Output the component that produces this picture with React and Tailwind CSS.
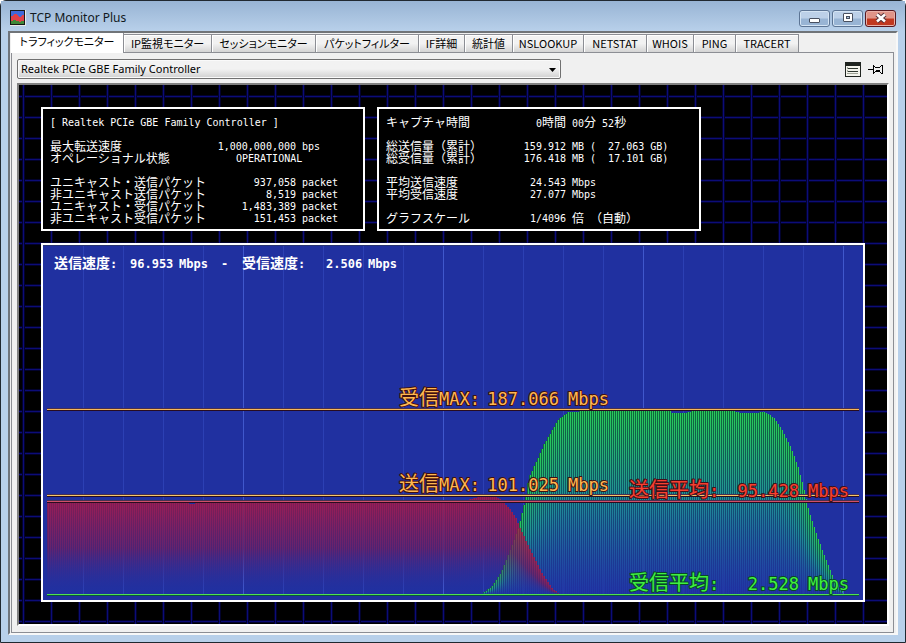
import { useState } from "react";
import clsx from "clsx";

const TABS = [
  { label: "トラフィックモニター", width: "w-[113px]" },
  { label: "IP監視モニター", width: "w-[88px]" },
  { label: "セッションモニター", width: "w-[104px]" },
  { label: "パケットフィルター", width: "w-[103px]" },
  { label: "IF詳細", width: "w-[46px]" },
  { label: "統計値", width: "w-[48px]" },
  { label: "NSLOOKUP", width: "w-[71px]" },
  { label: "NETSTAT", width: "w-[63px]" },
  { label: "WHOIS", width: "w-[47px]" },
  { label: "PING", width: "w-[42px]" },
  { label: "TRACERT", width: "w-[63px]" },
];

const INTERFACE_ROWS = [
  ["最大転送速度", "1,000,000,000", "bps"],
  ["オペレーショナル状態", "OPERATIONAL"],
  null,
  ["ユニキャスト・送信パケット", "937,058", "packet"],
  ["非ユニキャスト送信パケット", "8,519", "packet"],
  ["ユニキャスト・受信パケット", "1,483,389", "packet"],
  ["非ユニキャスト受信パケット", "151,453", "packet"],
];

const CAPTURE_ROWS = [
  ["キャプチャ時間", "0時間", "00分 52秒"],
  null,
  ["総送信量（累計）", "159.912", "MB (  27.063 GB)"],
  ["総受信量（累計）", "176.418", "MB (  17.101 GB)"],
  null,
  ["平均送信速度", "24.543", "Mbps"],
  ["平均受信速度", "27.077", "Mbps"],
  null,
  ["グラフスケール", "1/4096", "倍 （自動）"],
];

// [x, y] of the top of the traffic curves, in chart units
const BASE = 349;
const SENT = [
  [4, 256], [33, 256], [34, 257], [145, 257], [146, 259], [150, 259], [151, 257],
  [414, 257], [424, 255], [434, 252], [450, 251], [457, 255], [465, 263], [471, 271],
  [477, 285], [487, 306], [497, 326], [507, 342], [515, 349],
];
const RECEIVED = [
  [438, 349], [447, 342], [457, 327], [467, 303], [474, 284], [480, 260], [485, 232],
  [494, 213], [500, 199], [507, 187], [514, 175], [524, 167], [547, 166], [626, 166],
  [627, 168], [640, 168], [650, 166], [690, 166], [697, 168], [710, 168], [720, 167],
  [724, 169], [730, 173], [739, 187], [747, 203], [754, 222], [760, 245], [765, 267],
  [772, 288], [779, 308], [789, 332], [799, 348],
];

function sample(points) {
  const bars = [];
  let i = 0;
  for (let x = points[0][0]; x < points[points.length - 1][0]; x += 2) {
    while (points[i + 1][0] < x) i++;
    const [x0, y0] = points[i];
    const [x1, y1] = points[i + 1];
    const y = Math.round(y0 + ((y1 - y0) * (x - x0)) / (x1 - x0));
    if (y < BASE) bars.push({ x, y });
  }
  return bars;
}

// Japanese glyphs are two cells wide, latin ones a single cell
function Cells({ text }) {
  return (
    <div className="h-3">
      {text.split(/([^\x00-\x7f]+)/).map((part, i) =>
        i % 2 ? (
          <span key={i} className="text-[12px] leading-3">{part}</span>
        ) : (
          <span key={i}>{part}</span>
        )
      )}
    </div>
  );
}

function InfoTable({ rows, valueWidth, unitWidth }) {
  return (
    <table className="w-full table-fixed border-collapse">
      <colgroup>
        <col />
        <col className={valueWidth} />
        <col className={unitWidth} />
      </colgroup>
      <tbody>
        {rows.map((row, i) =>
          row ? (
            <tr key={i} className="h-3">
              <th scope="row" className="h-3 p-0 text-left align-top font-normal">
                <Cells text={row[0]} />
              </th>
              {row.length === 2 ? (
                <td colSpan={2} className="h-3 p-0 pl-9 align-top">
                  <Cells text={row[1]} />
                </td>
              ) : (
                <>
                  <td className="h-3 p-0 text-right align-top"><Cells text={row[1]} /></td>
                  <td className="h-3 p-0 pl-[6px] align-top"><Cells text={row[2]} /></td>
                </>
              )}
            </tr>
          ) : (
            <tr key={i} className="h-3" />
          )
        )}
      </tbody>
    </table>
  );
}

function InfoPanel({ children }) {
  return (
    <section className="w-[324px] h-[124px] shrink-0 border-2 border-white bg-black px-[7px] pt-2 pb-1 font-['DejaVu_Sans_Mono','Noto_Sans_CJK_JP',monospace] text-[10px] leading-3 whitespace-pre text-white">
      {children}
    </section>
  );
}

function Bars({ points, fill, shade }) {
  return sample(points).map(({ x, y }) => (
    <g key={x}>
      <rect x={x} y={y} width="1" height={BASE - y} fill={shade} />
      <rect x={x + 1} y={y} width="1" height={BASE - y} fill={fill} />
    </g>
  ));
}

function Gradient({ id, from, mid, to, opacity, end }) {
  return (
    <linearGradient id={id} x1="0" y1="0" x2="0" y2="1">
      <stop offset="0" stopColor={from} stopOpacity={opacity} />
      <stop offset="0.5" stopColor={mid} stopOpacity={opacity} />
      <stop offset="1" stopColor={to} stopOpacity={end} />
    </linearGradient>
  );
}

function Level({ y, color }) {
  return (
    <g shapeRendering="crispEdges">
      <rect x="4" y={y - 1} width="812" height="1" fill="#483050" />
      <rect x="4" y={y} width="812" height="1" fill={color} />
      <rect x="4" y={y + 1} width="812" height="1" fill="#280c20" />
    </g>
  );
}

function Caption({ x, y, name, latin = "", value, fill, stroke, unitX }) {
  return (
    <g
      className="font-['DejaVu_Sans_Mono','Noto_Sans_CJK_JP',monospace] text-[17px]"
      fill={fill}
      stroke={stroke}
      strokeWidth="2"
      strokeLinejoin="round"
      paintOrder="stroke"
    >
      <text x={x} y={y}>
        <tspan className="text-[20px]">{name}</tspan>{latin}:
      </text>
      <text x={unitX - 9} y={y} textAnchor="end">{value}</text>
      <text x={unitX} y={y}>Mbps</text>
    </g>
  );
}

function TrafficChart() {
  return (
    <svg
      viewBox="0 0 820 355"
      className="block h-auto w-full bg-[#2030a0]"
      role="img"
      aria-label="送信速度と受信速度"
    >
      <defs>
        <Gradient id="rx" from="#28cc58" mid="#208c98" to="#2038a8" opacity="1" end="0.7" />
        <Gradient id="rxShade" from="#10683c" mid="#105070" to="#2030a0" opacity="1" end="0.6" />
        <Gradient id="tx" from="#b81844" mid="#782060" to="#2830a0" opacity="0.8" end="0" />
        <Gradient id="txShade" from="#981840" mid="#581f68" to="#2830a0" opacity="0.8" end="0" />
      </defs>

      <rect width="820" height="1" fill="#283470" />
      <g shapeRendering="crispEdges">
        {Array.from({ length: 20 }, (_, i) => (
          <rect
            key={i}
            x={(i + 1) * 40}
            y="1"
            width="1"
            height="348"
            fill={(i + 1) % 5 === 0 ? "#4058cc" : "#2c40b4"}
          />
        ))}
        <Bars points={RECEIVED} fill="url(#rx)" shade="url(#rxShade)" />
        <Bars points={SENT} fill="url(#tx)" shade="url(#txShade)" />
      </g>

      <Level y={164} color="#f8b858" />
      <Level y={250} color="#f8c868" />
      <Level y={256} color="#d05068" />
      <g shapeRendering="crispEdges">
        <rect x="4" y="350" width="812" height="1" fill="#085040" />
        <rect x="4" y="349" width="812" height="1" fill="#50e050" />
      </g>

      <g
        className="font-['DejaVu_Sans_Mono','Noto_Sans_CJK_JP',monospace] text-[12px] font-bold"
        fill="#ffffff"
      >
        <text x="11" y="23"><tspan className="text-[14px]">送信速度</tspan>:</text>
        <text x="87" y="23">96.953</text>
        <text x="136" y="23">Mbps</text>
        <text x="178" y="23">-</text>
        <text x="199" y="23"><tspan className="text-[14px]">受信速度</tspan>:</text>
        <text x="283" y="23">2.506</text>
        <text x="325" y="23">Mbps</text>
      </g>

      <Caption x={356} unitX={525} y={160} name="受信" latin="MAX" value="187.066" fill="#ffb850" stroke="#401010" />
      <Caption x={356} unitX={525} y={246} name="送信" latin="MAX" value="101.025" fill="#ffb850" stroke="#401010" />
      <Caption x={586} unitX={765} y={252} name="送信平均" value="95.428" fill="#f84030" stroke="#401018" />
      <Caption x={586} unitX={765} y={345} name="受信平均" value="2.528" fill="#40f040" stroke="#084828" />
    </svg>
  );
}

function AppIcon() {
  return (
    <svg width="16" height="16" viewBox="0 0 16 16" shapeRendering="crispEdges" aria-hidden="true">
      <rect width="16" height="16" fill="#e8e8e8" />
      <rect width="15" height="15" fill="#181818" />
      <rect x="1" y="1" width="13" height="13" fill="#4068d8" />
      <path d="M1 6h2V5h1V4h3v1h1v1h1v1h2V6h1V5h2v9H1z" fill="#e04048" />
      <path d="M1 11h2v-1h3v1h3v1h2v-1h3v3H1z" fill="#408838" />
    </svg>
  );
}

function CaptionButton({ label, close, children }) {
  return (
    <button
      type="button"
      aria-label={label}
      className={clsx(
        "flex h-[17px] w-[31px] items-center justify-center rounded-[3px] border",
        close
          ? "border-[#581820] bg-linear-to-b from-[#e09488] from-45% to-[#c03820] to-55% shadow-[inset_0_0_0_1px_#e8b0a8]"
          : "border-[#5c7494] bg-linear-to-b from-[#bcd0e8] from-45% to-[#98b4d4] to-55% shadow-[inset_0_0_0_1px_#d4e4f4]"
      )}
    >
      {children}
    </button>
  );
}

function TitleBar() {
  return (
    <header className="flex h-[30px] items-center bg-linear-to-b from-[#98b4d4] to-[#b8d0ea] pt-1 pr-[9px] pl-[9px]">
      <AppIcon />
      <h1 className="ml-1 flex-1 font-['Noto_Sans',sans-serif] text-[12px] leading-4 text-[#101820]">
        TCP Monitor Plus
      </h1>
      <div className="flex gap-[2px]">
        <CaptionButton label="最小化">
          <svg width="12" height="12" viewBox="0 0 12 12" aria-hidden="true">
            <rect x="0.5" y="6.5" width="10" height="4" rx="0.5" fill="#fff" stroke="#485060" />
          </svg>
        </CaptionButton>
        <CaptionButton label="最大化">
          <svg width="12" height="12" viewBox="0 0 12 12" aria-hidden="true">
            <rect x="1.5" y="1.5" width="9" height="8" rx="0.5" fill="#fff" stroke="#485060" />
            <rect x="4.5" y="4.5" width="3" height="2" fill="#a8c0dc" stroke="#485060" />
          </svg>
        </CaptionButton>
        <CaptionButton label="閉じる" close>
          <svg width="12" height="12" viewBox="0 0 12 12" aria-hidden="true">
            <path d="M2 2.5l8 7m0-7l-8 7" stroke="#503038" strokeWidth="4.4" />
            <path d="M2 2.5l8 7m0-7l-8 7" stroke="#fff" strokeWidth="2.6" />
          </svg>
        </CaptionButton>
      </div>
    </header>
  );
}

function TabBar({ current, onSelect }) {
  return (
    <div role="tablist" className="flex h-[19px] items-end">
      {TABS.map(({ label, width }, i) => (
        <button
          key={label}
          type="button"
          role="tab"
          aria-selected={i === current}
          onClick={() => onSelect(i)}
          className={clsx(
            "flex shrink-0 items-center justify-center whitespace-nowrap border-[#8c8e94] text-[11px] leading-4 [font-feature-settings:'palt']",
            width,
            i === current
              ? "relative -mb-px h-5 border-r bg-white pb-1"
              : "h-[18px] border-t border-r bg-linear-to-b from-[#f2f2f2] from-50% to-[#d4d4d4] pb-px shadow-[inset_1px_1px_0_#fff]"
          )}
        >
          {label}
        </button>
      ))}
    </div>
  );
}

function Toolbar() {
  return (
    <div className="flex items-center pt-[6px] pr-[9px] pb-1 pl-[5px]">
      <div className="relative w-[544px]">
        <select
          aria-label="ネットワークインターフェース"
          className="block h-5 w-full appearance-none rounded-[2px] border border-[#707070] bg-linear-to-b from-[#f2f2f2] from-50% to-[#d0d0d0] pr-5 pl-[3px] font-['Noto_Sans',sans-serif] text-[11px] leading-4 shadow-[inset_0_0_0_1px_#fafafa]"
        >
          <option>Realtek PCIe GBE Family Controller</option>
        </select>
        <svg width="7" height="4" viewBox="0 0 7 4" className="pointer-events-none absolute top-[9px] right-[5px]" aria-hidden="true">
          <path d="M0 0h7L3.5 4z" />
        </svg>
      </div>
      <button type="button" aria-label="一覧" className="ml-auto">
        <svg width="16" height="15" viewBox="0 0 16 15" shapeRendering="crispEdges" aria-hidden="true">
          <path d="M0 0h16v15H0z" fill="#202420" />
          <path d="M1 4h14v10H1z" fill="#f4f4ec" />
          <path d="M3 6h10v1H3zM3 9h10v1H3z" fill="#303830" />
          <path d="M2 5h1v2H2zM2 8h1v2H2zM2 11h11v1H2z" fill="#a0a498" />
        </svg>
      </button>
      <button type="button" aria-label="常に手前に表示" className="ml-[7px]">
        <svg width="16" height="15" viewBox="0 0 16 15" shapeRendering="crispEdges" aria-hidden="true">
          <path d="M0 7h5v1H0zM5 3h1v9H5zM6 4h1v1H6zM6 10h1v1H6zM7 5h1v1H7zM7 9h1v1H7zM8 5h4v1H8zM8 8h4v2H8zM12 4h1v1h-1zM12 10h1v1h-1zM13 3h1v1h-1zM13 11h1v1h-1zM14 3h1v9h-1z" />
        </svg>
      </button>
    </div>
  );
}

export default function App() {
  const [tab, setTab] = useState(0);

  return (
    <div className="flex min-h-screen flex-col rounded-t-md border border-[#202830] bg-[#b8d0ea] font-['Noto_Sans_CJK_JP',sans-serif] text-[12px] text-black">
      <TitleBar />
      <main className="mx-[7px] mb-[7px] flex flex-1 flex-col border-2 border-[#f8f8f8] border-t-[#707478] border-l-[#70757c] bg-[#f0f0f0] pl-px">
        <TabBar current={tab} onSelect={setTab} />
        <div className="mr-[2px] flex flex-1 flex-col border border-[#8c8e94] bg-[#f0f0f0]">
          <Toolbar />
          <div className="mr-1 mb-[6px] ml-[5px] flex-1 border-2 border-t-[#808080] border-r-white border-b-white border-l-[#808080] bg-black bg-[linear-gradient(to_right,#02022c_1px,#0c0c78_1px,#0c0c78_2px,#02022c_2px,#02022c_3px,transparent_3px),linear-gradient(to_bottom,#02022c_1px,#0c0c78_1px,#0c0c78_2px,#02022c_2px,#02022c_3px,transparent_3px)] bg-size-[28px_21px] bg-position-[3px_10px] bg-origin-padding px-[22px] pt-[22px] pb-[21px]">
            <div className="flex flex-wrap gap-3">
              <InfoPanel>
                <div className="mb-3"><Cells text="[ Realtek PCIe GBE Family Controller ]" /></div>
                <InfoTable rows={INTERFACE_ROWS} valueWidth="w-[96px]" unitWidth="w-[60px]" />
              </InfoPanel>
              <InfoPanel>
                <InfoTable rows={CAPTURE_ROWS} valueWidth="w-[60px]" unitWidth="w-[126px]" />
              </InfoPanel>
            </div>
            <section className="mt-3 border-2 border-white">
              <TrafficChart />
            </section>
          </div>
        </div>
      </main>
    </div>
  );
}
